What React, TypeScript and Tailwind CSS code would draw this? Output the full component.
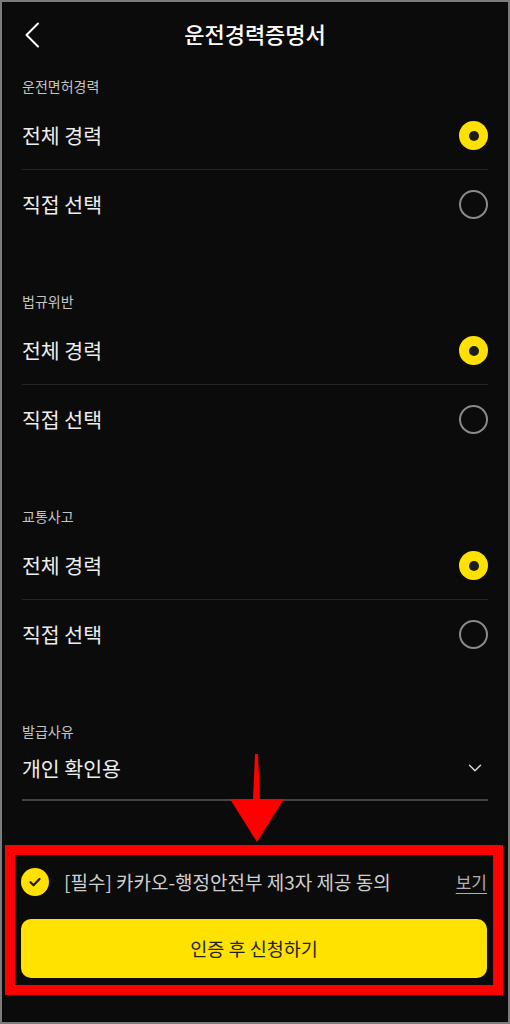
import { ChevronDown } from "lucide-react"

const font = { fontFamily: '"Noto Sans CJK KR", "Noto Sans", sans-serif' }

function Radio({ on }: { on: boolean }) {
    if (on) {
        return (
            <span className="flex h-[29px] w-[29px] items-center justify-center rounded-full bg-[#ffe100]">
                <span className="h-[10px] w-[10px] rounded-full bg-[#1c1c1c]" />
            </span>
        )
    }
    return <span className="h-[29px] w-[29px] rounded-full border-2 border-[#8a8a8a]" />
}

function Section({ label, last }: { label: string; last?: boolean }) {
    return (
        <div className={last ? "" : "pb-[53px]"}>
            <div className="h-[20px] text-[14px] leading-[20px] text-[#c4c4c4]">{label}</div>
            <div className="mt-[6px] flex h-[68px] items-center justify-between border-b border-[#262626]">
                <span className="text-[20.5px] text-[#ededed]">전체 경력</span>
                <Radio on />
            </div>
            <div className="flex h-[68px] items-center justify-between">
                <span className="text-[20.5px] text-[#ededed]">직접 선택</span>
                <Radio on={false} />
            </div>
        </div>
    )
}

export default function App() {
    return (
        <div
            style={font}
            className="relative h-[1024px] w-[510px] overflow-hidden border-2 border-[#7c7c7c] bg-[#0b0b0b]"
        >
            {/* header */}
            <div className="relative flex h-[62px] items-center justify-center">
                <svg className="absolute left-[21px] top-[19px]" width="18" height="28" viewBox="0 0 18 28" fill="none">
                    <polyline points="15,2.5 3.5,14 15,25.5" stroke="#fff" strokeWidth="2" strokeLinecap="round" strokeLinejoin="round" />
                </svg>
                <h1 className="text-[22px] font-medium text-white">운전경력증명서</h1>
            </div>

            <div className="px-[20px] pt-[12px]">
                <Section label="운전면허경력" />
                <Section label="법규위반" />
                <Section label="교통사고" />

                <div>
                    <div className="h-[20px] text-[14px] leading-[20px] text-[#c4c4c4]">발급사유</div>
                    <div className="flex h-[60px] items-center justify-between border-b-2 border-[#444] pb-[4px]">
                        <span className="text-[20.5px] text-[#ededed]">개인 확인용</span>
                        <ChevronDown className="mr-[2px] h-[22px] w-[22px] text-[#d8d8d8]" strokeWidth={1.6} />
                    </div>
                </div>
            </div>

            {/* agreement + button, with red highlight */}
            <div className="ml-[3px] mr-[5px] mt-[44px] border-[10px] border-[#ff0000] pb-[7px] pl-[6px] pr-[6px] pt-[13px]">
                <div className="flex h-[28px] items-center">
                    <span className="flex h-[28px] w-[28px] shrink-0 items-center justify-center rounded-full bg-[#ffe100]">
                        <svg width="16" height="16" viewBox="0 0 16 16" fill="none">
                            <path d="M3.5 8.3l3 3 6-6.3" stroke="#1c1c1c" strokeWidth="2.2" strokeLinecap="round" strokeLinejoin="round" />
                        </svg>
                    </span>
                    <span className="ml-[15px] flex-1 whitespace-nowrap text-[19px] text-[#cfcfcf]">[필수] 카카오-행정안전부 제3자 제공 동의</span>
                    <span className="text-[17px] text-[#b0b0b0] underline underline-offset-4">보기</span>
                </div>
                <button className="mt-[23px] flex h-[59px] w-full items-center justify-center rounded-[10px] bg-[#ffe200] text-[18.5px] text-[#222]">
                    인증 후 신청하기
                </button>
            </div>

            {/* red arrow overlay */}
            <svg className="absolute left-[226px] top-[750px]" width="58" height="92" viewBox="0 0 58 92">
                <polygon points="27,2 30,2 32,47 56,47 29,90 2,47 25,47" fill="#ff0000" />
            </svg>
        </div>
    )
}
